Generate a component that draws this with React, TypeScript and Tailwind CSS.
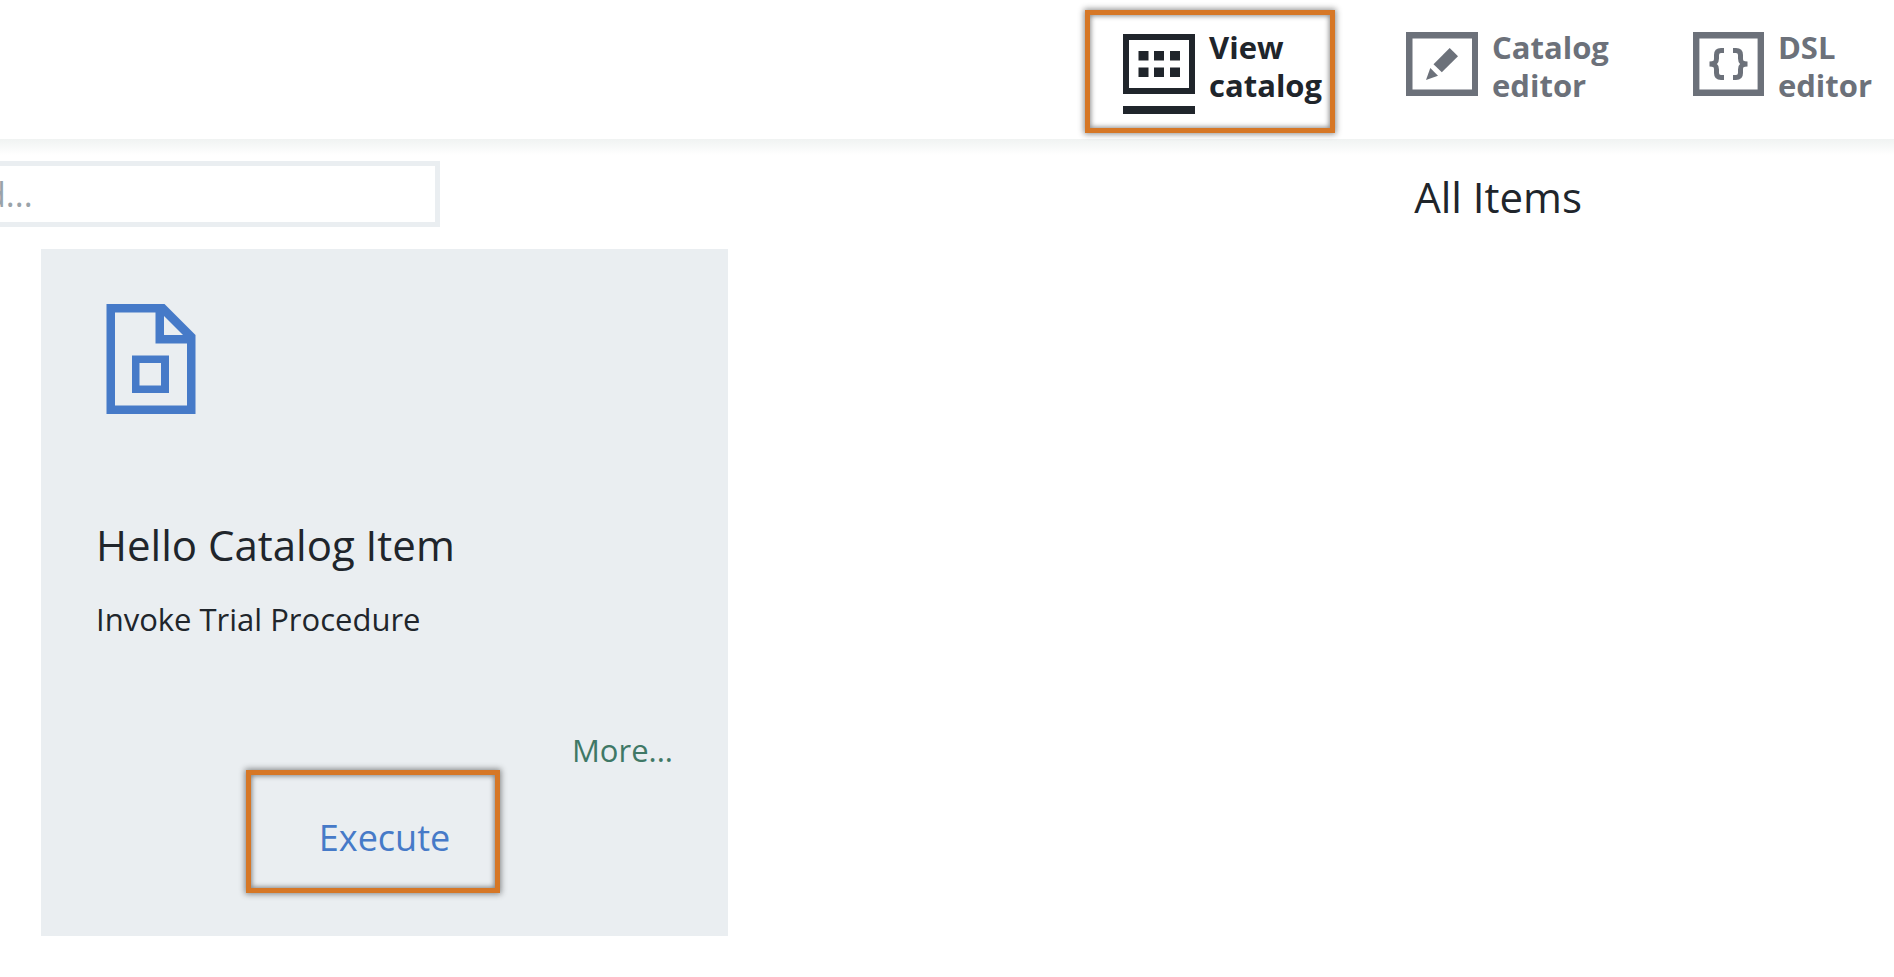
import type { ReactNode } from "react";

function CatalogIcon() {
  return (
    <svg width="72" height="80" viewBox="0 0 72 80" fill="currentColor" aria-hidden="true">
      <path d="M0 0h72v60H0zM6 6v48h60V6z" fillRule="evenodd" />
      <path d="M15.5 17h10v9.500h-10zM31 17h10v9.500h-10zM47 17h10v9.500h-10zM15.500 33.500h10v9.500h-10zM31 33.500h10v9.500h-10zM47 33.500h10v9.500h-10z" />
      <path d="M0 72h72v8H0z" />
    </svg>
  );
}

function PencilIcon() {
  return (
    <svg width="72" height="64" viewBox="0 0 72 64" fill="currentColor" aria-hidden="true">
      <path d="M0 0h72v64H0zM6.500 6.500v51h59.500v-51z" fillRule="evenodd" />
      <path d="M43.700 16L52 24.200 35.800 40.300 27.500 32.200z" />
      <path d="M24.300 36L32 43.700 20 48z" />
    </svg>
  );
}

function BracesIcon() {
  return (
    <svg width="71" height="64" viewBox="0 0 71 64" fill="none" stroke="currentColor" aria-hidden="true">
      <path d="M3.200 3.200h64.600v57.600H3.200z" strokeWidth="6.400" />
      <path d="M31 18.500h-3c-3 0-4.500 1.500-4.500 4.500v3.500c0 3.500-1.500 5.500-7 5.500 5.500 0 7 2 7 5.500V41c0 3 1.500 4.500 4.500 4.500h3" strokeWidth="5" />
      <path d="M40 18.500h3c3 0 4.500 1.500 4.500 4.500v3.500c0 3.500 1.500 5.500 7 5.500-5.500 0-7 2-7 5.500V41c0 3-1.500 4.500-4.500 4.500h-3" strokeWidth="5" />
    </svg>
  );
}

function FileIcon() {
  return (
    <svg width="90" height="110" viewBox="0 0 90 110" fill="#467ac8" fillRule="evenodd" aria-hidden="true">
      <path d="M.5 0h58L89.500 31v79H.5zM9 8.500v93h72V39.500H49.500v-31zM58 12v19h19z" />
      <path d="M26 51.500h37V89H26zM33.500 59v22.500h21.500V59z" />
    </svg>
  );
}

function Highlight({ className }: { className: string }) {
  return (
    <span
      aria-hidden="true"
      className={`pointer-events-none absolute border-5 border-[#d67726] shadow-[0_0_6px_1px_rgba(0,0,0,0.45),inset_0_0_5px_1px_rgba(0,0,0,0.45)] ${className}`}
    />
  );
}

function NavItem({ icon, first, second, active }: { icon: ReactNode; first: string; second: string; active?: boolean }) {
  return (
    <a
      href="#"
      aria-current={active ? "page" : undefined}
      className={`relative flex items-start gap-3.5 ${active ? "text-[#20252b]" : "text-[#6c717a]"}`}
    >
      <span className={active ? "pt-1.5" : "pt-1"}>{icon}</span>
      <span className="text-[31px] leading-[38px] font-bold">
        {first}
        <br />
        {second}
      </span>
      {active && <Highlight className="-top-[18px] -right-[13px] -left-[38px] h-[123px]" />}
    </a>
  );
}

export default function App() {
  return (
    <div className="min-h-screen overflow-hidden bg-white font-['Open_Sans',sans-serif] text-[#20252b]">
      <header className="h-[139px] pt-7 pr-[22px]">
        <nav className="flex justify-end gap-[84px]">
          <NavItem icon={<CatalogIcon />} first="View" second="catalog" active />
          <NavItem icon={<PencilIcon />} first="Catalog" second="editor" />
          <NavItem icon={<BracesIcon />} first="DSL" second="editor" />
        </nav>
      </header>
      <div className="h-4 bg-linear-to-b from-[#f0f3f2] to-white" />

      <main className="pt-1.5">
        <div className="flex items-start justify-between pr-[312px]">
          <input
            type="text"
            aria-label="Keyword"
            placeholder="d..."
            className="-ml-5 h-[66px] w-[460px] border-5 border-[#eaeef1] text-[34px] outline-none placeholder:text-[#9aa3a9]"
          />
          <h1 className="pt-1.5 text-[42px] leading-[60px]">All Items</h1>
        </div>

        <article className="relative mt-[22px] ml-[41px] flex w-[687px] flex-col bg-[#eaeef1] px-[55px] pt-[55px] pb-[70px]">
          <div className="pl-2.5">
            <FileIcon />
          </div>
          <h2 className="mt-[101px] text-[42px] leading-[60px]">Hello Catalog Item</h2>
          <p className="mt-[22px] text-[31px] leading-[44px]">Invoke Trial Procedure</p>
          <a href="#" className="mt-[87px] self-end text-[31px] leading-[44px] text-[#3f7866]">
            More...
          </a>
          <button type="button" className="mt-[38px] self-center text-[36px] leading-[56px] text-[#467ac8]">
            Execute
          </button>
          <Highlight className="bottom-[43px] left-[205px] h-[123px] w-[254px]" />
        </article>
      </main>
    </div>
  );
}
